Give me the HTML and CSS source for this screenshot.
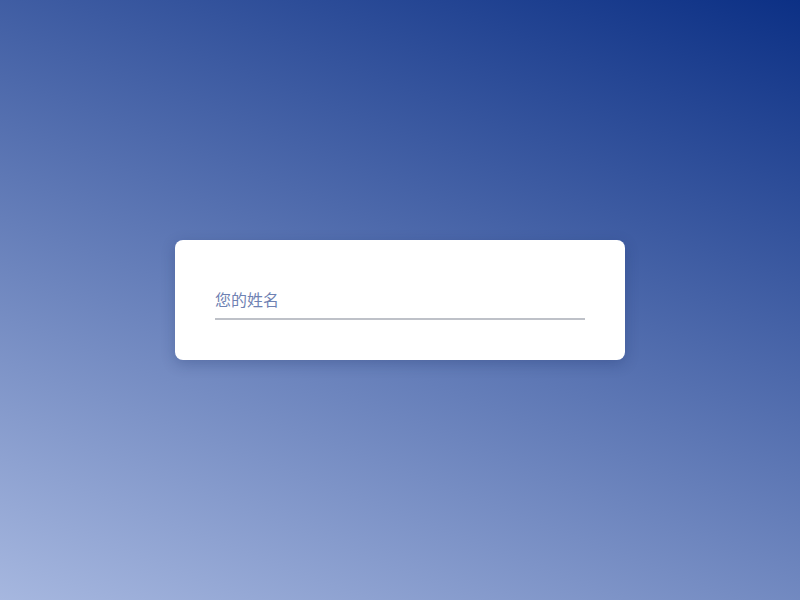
FILE: index.html
```html
<!DOCTYPE html>
<html lang="zh">
<head>
<meta charset="utf-8">
<title>Name</title>
<link rel="stylesheet" href="styles.css">
</head>
<body>
<main class="stage">
  <form class="card">
    <input class="field" type="text" placeholder="您的姓名">
  </form>
</main>
</body>
</html>
```

FILE: styles.css
```css
html, body {
  margin: 0;
  height: 100%;
}
body {
  background: linear-gradient(21deg, #a6b7df 0%, #0c3085 100%);
  font-family: "Noto Sans CJK SC", "Noto Sans", sans-serif;
}
.stage {
  height: 100%;
  display: flex;
  align-items: center;
  justify-content: center;
}
.card {
  width: 370px;
  padding: 40px;
  background: #fff;
  border-radius: 8px;
  box-shadow: 0 4px 14px rgba(20, 40, 90, 0.25);
}
.field {
  display: block;
  box-sizing: border-box;
  width: 100%;
  height: 40px;
  margin: 0;
  padding: 0;
  border: 0;
  border-bottom: 2px solid #bec1c8;
  outline: none;
  font-family: inherit;
  font-size: 16px;
  color: #333;
  background: transparent;
}
.field::placeholder {
  color: #6f82b3;
  opacity: 1;
}
```
